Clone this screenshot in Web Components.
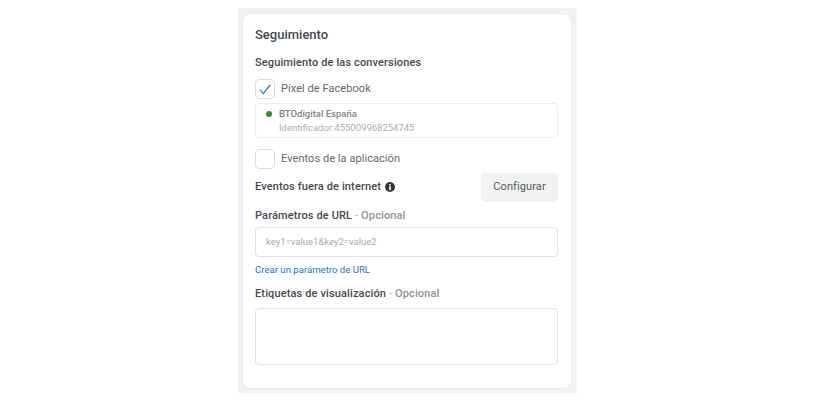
<!DOCTYPE html>
<html lang="es">
<head>
<meta charset="utf-8">
<title>Seguimiento</title>
<style>
  html, body { margin: 0; background: #fff; }
  body { font-family: Roboto, "Liberation Sans", sans-serif; color: #444950; height: 400px; overflow: hidden; }
</style>
</head>
<body>
<tracking-page>
  <tracking-card></tracking-card>
</tracking-page>

<script>
class TrackingPage extends HTMLElement {
    constructor() {
        super();
        this.attachShadow({ mode: "open" });
        this.shadowRoot.innerHTML = `
            <style>
            :host { display: flex; justify-content: flex-start; padding: 8px 0 0 238px; }
            .panel { width: 339px; height: 385px; box-sizing: border-box; padding: 6px 6px 5px 5px; background: #f1f2f2; }
            </style>
            <div class="panel"><slot></slot></div>
        `;
    }
}

class HLabel extends HTMLElement {
    constructor() {
        super();
        this.attachShadow({ mode: "open" });
        this.shadowRoot.innerHTML = `
            <style>
            :host { display: block; font-size: var(--size, 11px); font-weight: 500; line-height: 16px; color: #45494e; letter-spacing: var(--track, .13px); }
            </style>
            <slot></slot>
        `;
    }
}

class CheckRow extends HTMLElement {
    constructor() {
        super();
        this.attachShadow({ mode: "open" });
        const tick = this.hasAttribute("checked")
            ? `<svg width="12" height="11" viewBox="0 0 12 11"><path d="M.8 5.6 4.3 9.6 11.2 1" fill="none" stroke="#2a86bf" stroke-width="1.3"/></svg>`
            : "";
        this.shadowRoot.innerHTML = `
            <style>
            :host { display: flex; align-items: center; gap: 6px; font-size: 11px; color: #63676d; letter-spacing: .06px; }
            .box { width: 20px; height: 20px; box-sizing: border-box; border: 1px solid #d8dadc; border-radius: 4px; background: #fff; display: flex; align-items: center; justify-content: center; }
            .text { padding-bottom: 2px; }
            </style>
            <div class="box">${tick}</div>
            <div class="text"><slot></slot></div>
        `;
    }
}

class PixelBox extends HTMLElement {
    constructor() {
        super();
        this.attachShadow({ mode: "open" });
        this.shadowRoot.innerHTML = `
            <style>
            :host { display: block; box-sizing: border-box; height: 35px; border: 1px solid #ebeced; border-radius: 4px; padding: 3px 10px; }
            .name { display: flex; align-items: center; gap: 7px; font-size: 9.5px; font-weight: 500; color: #7f8388; line-height: 14px; }
            .dot { width: 6px; height: 6px; border-radius: 50%; background: #1a9c2a; }
            .id { margin-left: 13px; font-size: 9.5px; color: #abaeb2; line-height: 14px; }
            </style>
            <div class="name"><span class="dot"></span><span>BTOdigital España</span></div>
            <div class="id">Identificador:455009968254745</div>
        `;
    }
}

class TrackingCard extends HTMLElement {
    constructor() {
        super();
        this.attachShadow({ mode: "open" });
        this.shadowRoot.innerHTML = `
            <style>
            :host { display: block; box-sizing: border-box; width: 328px; height: 374px; padding: 13px 13px 0 12px; background: #fff; border-radius: 7px; box-shadow: 0 0 0 1px #e9eaeb; }
            .title { --size: 13px; --track: 0; }
            .conv { margin-top: 12px; }
            .c1 { margin-top: 8px; }
            pixel-box { margin-top: 4px; }
            .c2 { margin-top: 11px; }
            .off { display: flex; align-items: center; justify-content: space-between; margin-top: 4px; }
            .off div { display: flex; align-items: center; gap: 4px; padding-bottom: 2px; }
            button { width: 77px; height: 29px; border: 0; border-radius: 4px; background: #f1f2f2; color: #55595e; font: 11px Roboto, sans-serif; letter-spacing: .1px; padding: 0 0 2px; }
            .url { margin-top: 6px; }
            .field { box-sizing: border-box; margin-top: 3px; border: 1px solid #dfe0e2; border-radius: 4px; background: #fff; }
            .input { height: 30px; padding: 0 10px 2px; display: flex; align-items: center; font-size: 9.5px; color: #a6a9ad; }
            a { display: block; margin-top: 7px; font-size: 9.6px; line-height: 12px; color: #1877c4; text-decoration: none; }
            .tags { margin-top: 10px; }
            .area { height: 57px; margin-top: 6px; }
            .opt { color: #8f9296; }
            </style>
            <h-label class="title">Seguimiento</h-label>
            <h-label class="conv">Seguimiento de las conversiones</h-label>
            <check-row class="c1" checked>Píxel de Facebook</check-row>
            <pixel-box></pixel-box>
            <check-row class="c2">Eventos de la aplicación</check-row>
            <div class="off">
                <div>
                    <h-label>Eventos fuera de internet</h-label>
                    <svg width="10" height="10" viewBox="0 0 10 10"><circle cx="5" cy="5" r="5" fill="#33373b"/><rect x="4.2" y="4.2" width="1.6" height="3.8" fill="#fff"/><rect x="4.2" y="2" width="1.6" height="1.5" fill="#fff"/></svg>
                </div>
                <button>Configurar</button>
            </div>
            <h-label class="url">Parámetros de URL <span class="opt">· Opcional</span></h-label>
            <div class="field input">key1=value1&amp;key2=value2</div>
            <a href="#">Crear un parámetro de URL</a>
            <h-label class="tags">Etiquetas de visualización <span class="opt">· Opcional</span></h-label>
            <div class="field area"></div>
        `;
    }
}

customElements.define("tracking-page", TrackingPage);
customElements.define("h-label", HLabel);
customElements.define("check-row", CheckRow);
customElements.define("pixel-box", PixelBox);
customElements.define("tracking-card", TrackingCard);
</script>
</body>
</html>
